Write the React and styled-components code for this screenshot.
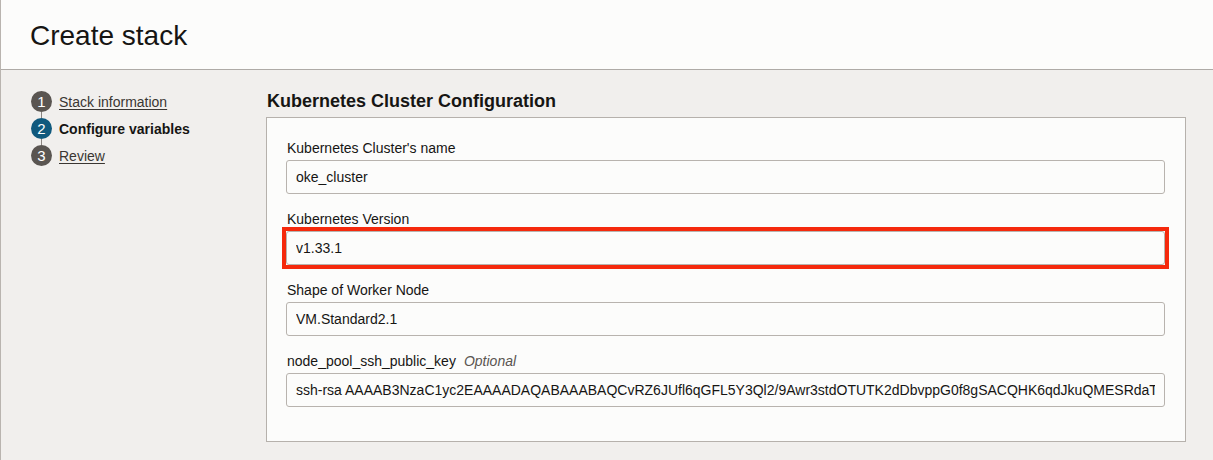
import React from 'react'
import styled, { createGlobalStyle } from 'styled-components'

const GlobalStyle = createGlobalStyle`
  html, body {
    margin: 0;
    padding: 0;
    background: #f1efed;
  }
  body {
    font-family: "Liberation Sans", Arial, Helvetica, sans-serif;
    color: #161513;
  }
`

const Page = styled.div`
  min-height: 460px;
  background: #f1efed;
  border-left: 1px solid #b9b4af;
  box-sizing: border-box;
`

const Header = styled.header`
  height: 70px;
  box-sizing: border-box;
  background: #fcfcfb;
  border-bottom: 1px solid #aeaaa6;
  display: flex;
  align-items: center;
  padding: 2px 0 0 29px;
`

const Title = styled.h1`
  margin: 0;
  font-size: 28px;
  font-weight: 400;
  color: #161513;
`

const Body = styled.div`
  display: flex;
`

const Sidebar = styled.nav`
  width: 235px;
  flex: 0 0 235px;
  padding: 18px 0 0 30px;
`

const StepList = styled.ol`
  list-style: none;
  margin: 0;
  padding: 0;
`

const Step = styled.li`
  height: 27px;
  display: flex;
  align-items: center;
  gap: 7px;
`

const Marker = styled.span`
  position: relative;
  width: 21px;
  height: 21px;
  border-radius: 50%;
  background: ${p => (p.$active ? '#10597d' : '#5a5551')};
  color: #fff;
  font-size: 15px;
  display: flex;
  align-items: center;
  justify-content: center;

  &::after {
    content: '';
    display: ${p => (p.$last ? 'none' : 'block')};
    position: absolute;
    left: 10px;
    top: 21px;
    width: 1px;
    height: 6px;
    background: #8a8480;
  }
`

const StepLink = styled.a`
  font-size: 14px;
  color: #3a3632;
  text-decoration: underline;
  text-underline-offset: 2px;
  cursor: pointer;
`

const StepCurrent = styled.span`
  font-size: 14px;
  font-weight: 700;
  color: #161513;
`

const Main = styled.main`
  flex: 1;
  padding: 20px 27px 0 0;
`

const SectionTitle = styled.h2`
  margin: 0 0 5px 1px;
  font-size: 18px;
  line-height: 22px;
  font-weight: 700;
  color: #161513;
`

const Panel = styled.section`
  background: #fcfcfb;
  border: 1px solid #b6b1ac;
  padding: 22px 20px 17px 19px;
`

const Field = styled.div`
  margin-bottom: 17px;
`

const Label = styled.label`
  display: flex;
  align-items: baseline;
  gap: 8px;
  font-size: 14px;
  line-height: 16px;
  margin: 0 0 4px 1px;
  color: #161513;
`

const Optional = styled.span`
  font-style: italic;
  color: #5a5551;
`

const Highlight = styled.div`
  margin: ${p => (p.$on ? '-4px' : '0')};
  border: ${p => (p.$on ? '4px solid #f5290c' : 'none')};
`

const Input = styled.input`
  display: block;
  width: 100%;
  height: 34px;
  box-sizing: border-box;
  border: 1px solid #b8b3ae;
  border-radius: 3px;
  background: #fcfcfb;
  padding: 0 9px;
  font-family: "Liberation Sans", Arial, Helvetica, sans-serif;
  font-size: 14px;
  color: #161513;
  outline: none;
`

const steps = [
  { n: 1, label: 'Stack information' },
  { n: 2, label: 'Configure variables', active: true },
  { n: 3, label: 'Review' },
]

const fields = [
  { label: "Kubernetes Cluster's name", value: 'oke_cluster' },
  { label: 'Kubernetes Version', value: 'v1.33.1', highlight: true },
  { label: 'Shape of Worker Node', value: 'VM.Standard2.1' },
  {
    label: 'node_pool_ssh_public_key',
    optional: true,
    value:
      'ssh-rsa AAAAB3NzaC1yc2EAAAADAQABAAABAQCvRZ6JUfl6qGFL5Y3Ql2/9Awr3stdOTUTK2dDbvppG0f8gSACQHK6qdJkuQMESRdaT7pXk2Lw9nRb3YcQ user@host',
  },
]

export default function App() {
  return (
    <Page>
      <GlobalStyle />
      <Header>
        <Title>Create stack</Title>
      </Header>
      <Body>
        <Sidebar>
          <StepList>
            {steps.map((s, i) => (
              <Step key={s.n}>
                <Marker $active={s.active} $last={i === steps.length - 1}>{s.n}</Marker>
                {s.active ? <StepCurrent>{s.label}</StepCurrent> : <StepLink>{s.label}</StepLink>}
              </Step>
            ))}
          </StepList>
        </Sidebar>
        <Main>
          <SectionTitle>Kubernetes Cluster Configuration</SectionTitle>
          <Panel>
            {fields.map(f => (
              <Field key={f.label}>
                <Label>
                  {f.label}
                  {f.optional && <Optional>Optional</Optional>}
                </Label>
                <Highlight $on={f.highlight}>
                  <Input readOnly defaultValue={f.value} />
                </Highlight>
              </Field>
            ))}
          </Panel>
        </Main>
      </Body>
    </Page>
  )
}
